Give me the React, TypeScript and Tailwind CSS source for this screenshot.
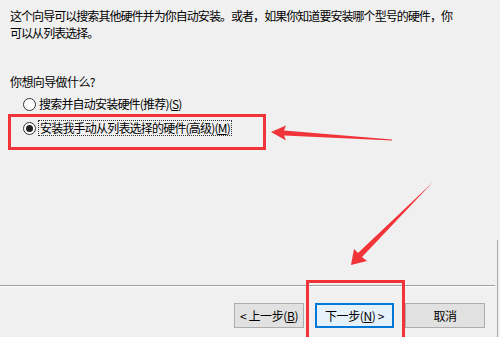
import React from "react";

const font = {
  fontFamily: '"Noto Sans CJK SC", "Microsoft YaHei", sans-serif',
};

const Radio = ({ checked }: { checked?: boolean }) => (
  <span className="flex h-[13px] w-[13px] shrink-0 items-center justify-center rounded-full border border-[#333] bg-white">
    {checked && <span className="h-[7px] w-[7px] rounded-full bg-[#222]" />}
  </span>
);

const Btn = ({
  children,
  active,
  w,
}: {
  children: React.ReactNode;
  active?: boolean;
  w: string;
}) => (
  <button
    className={
      (active
        ? "border-2 border-[#0078d7] bg-[#e5f1fb] "
        : "border border-[#adadad] bg-[#e1e1e1] ") +
      w +
      " flex h-[25px] items-center justify-center text-[12px] tracking-[-0.4px] text-black"
    }
  >
    {children}
  </button>
);

export default function App() {
  return (
    <div
      className="relative flex h-[337px] w-[500px] flex-col overflow-hidden bg-[#f0f0f0] text-black"
      style={font}
    >
      {/* 説明文 */}
      <div className="px-[10px] pt-[7px] text-[12px] leading-[17px]">
        <p className="whitespace-nowrap tracking-[-0.95px]">
          这个向导可以搜索其他硬件并为你自动安装。或者，如果你知道要安装哪个型号的硬件，你
        </p>
        <p className="tracking-[-0.95px]">可以从列表选择。</p>
      </div>

      <p className="mt-[32px] px-[10px] text-[12px] leading-[17px] tracking-[-0.6px]">
        你想向导做什么?
      </p>

      {/* 選択肢 */}
      <div className="mt-[6px] flex items-center gap-[3px] pl-[23px] text-[12px] leading-[16px]">
        <Radio />
        <span className="tracking-[-0.8px]">
          搜索并自动安装硬件(推荐)(<span className="underline">S</span>)
        </span>
      </div>

      <div className="ml-[8px] mt-[2px] flex h-[36px] w-[258px] items-start border-[3px] border-[#f0343a] pl-[12px] pt-[3px]">
        <div className="flex items-center gap-[2px] text-[12px] leading-[14px]">
          <Radio checked />
          <span className="border border-dotted border-[#333] px-px tracking-[-0.8px]">
            安装我手动从列表选择的硬件(高级)(<span className="underline">M</span>)
          </span>
        </div>
      </div>

      <div className="flex-1" />

      {/* 区切り線 */}
      <div className="mr-[5px] h-[2px] border-t border-[#a0a0a0] border-b border-b-white" />

      {/* ボタン */}
      <div className="flex justify-end gap-[11px] pb-[9px] pr-[15px] pt-[16px]">
        <Btn w="w-[70px]">
          &lt; 上一步(<span className="underline">B</span>)
        </Btn>
        <Btn active w="w-[79px]">
          下一步(<span className="underline">N</span>) &gt;
        </Btn>
        <Btn w="w-[80px]">取消</Btn>
      </div>

      {/* 右の枠線 */}
      <div className="absolute bottom-0 right-[2px] top-[240px] w-px bg-[#a8a8a8]" />

      {/* 注釈: 赤枠と矢印 */}
      <div className="absolute left-[306px] top-[280px] h-[70px] w-[99px] border-[3px] border-[#f0343a]" />
      <svg className="pointer-events-none absolute inset-0" width="500" height="337">
        <polygon
          points="271,132 286,125.5 284,130.5 392,139.5 392,140.5 284,135.5 286,140.5"
          fill="#f0343a"
        />
        <polygon
          points="351,265 354,249 358,253 433,182 362,257 367,261"
          fill="#f0343a"
        />
      </svg>
    </div>
  );
}
